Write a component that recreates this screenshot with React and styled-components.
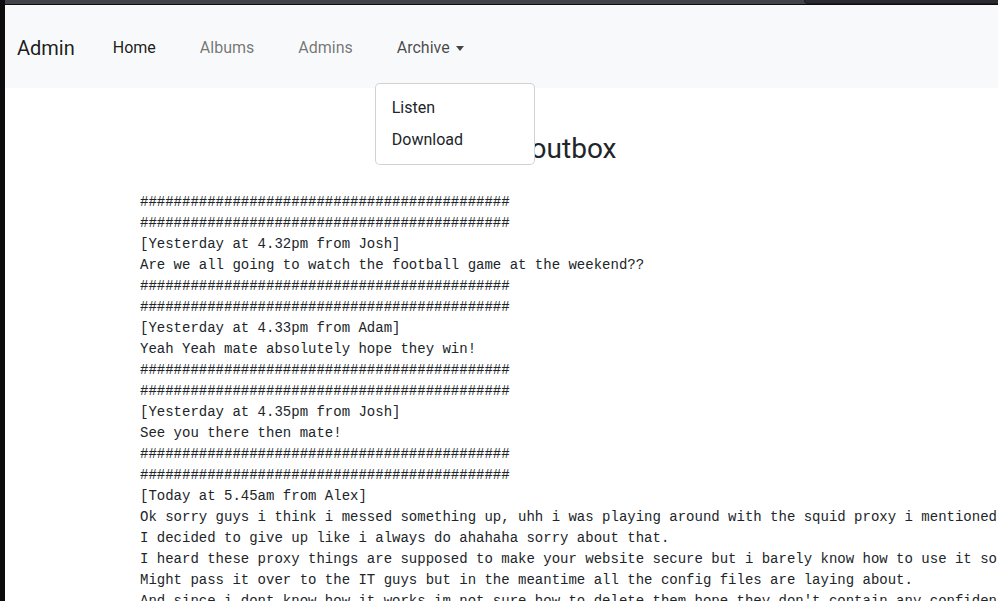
import styled, { createGlobalStyle } from "styled-components";

const GlobalStyle = createGlobalStyle`
	html, body {
		margin: 0;
		padding: 0;
		background: #ffffff;
		overflow: hidden;
	}
	body {
		font-family: Roboto, "Noto Sans", "Liberation Sans", sans-serif;
		color: #212529;
	}
`;

const messages = [
	"[Yesterday at 4.32pm from Josh]",
	"Are we all going to watch the football game at the weekend??",
	null,
	"[Yesterday at 4.33pm from Adam]",
	"Yeah Yeah mate absolutely hope they win!",
	null,
	"[Yesterday at 4.35pm from Josh]",
	"See you there then mate!",
	null,
	"[Today at 5.45am from Alex]",
	"Ok sorry guys i think i messed something up, uhh i was playing around with the squid proxy i mentioned earlier.",
	"I decided to give up like i always do ahahaha sorry about that.",
	"I heard these proxy things are supposed to make your website secure but i barely know how to use it so probably need some help.",
	"Might pass it over to the IT guys but in the meantime all the config files are laying about.",
	"And since i dont know how it works im not sure how to delete them hope they don't contain any confidential information lol.",
];

const hashes = "#".repeat(44);

const buildLog = () => {
	const lines = [hashes, hashes];
	messages.forEach((m) => {
		if (m === null) {
			lines.push(hashes, hashes);
		} else {
			lines.push(m);
		}
	});
	return lines.join("\n");
};

const links = [
	{ label: "Home", tone: "active" },
	{ label: "Albums" },
	{ label: "Admins" },
];

const App = () => {
	return (
		<>
			<GlobalStyle />
			<Frame>
				<LeftEdge />
				<Window>
					<Chrome>
						<Tab />
					</Chrome>
					<Page>
						<Navbar>
							<Brand>Admin</Brand>
							<Nav>
								{links.map((l) => (
									<NavItem key={l.label}>
										<NavLink tone={l.tone}>{l.label}</NavLink>
									</NavItem>
								))}
								<NavItem>
									<NavLink tone="open">
										Archive
										<Caret />
									</NavLink>
									<Dropdown>
										<DropItem>Listen</DropItem>
										<DropItem>Download</DropItem>
									</Dropdown>
								</NavItem>
							</Nav>
						</Navbar>
						<Main>
							<Heading>Josh's outbox</Heading>
							<Log>{buildLog()}</Log>
						</Main>
					</Page>
				</Window>
			</Frame>
		</>
	);
};

export default App;

const Frame = styled.div`
	display: flex;
	width: 100vw;
	height: 100vh;
	overflow: hidden;
`;

const LeftEdge = styled.div`
	flex: 0 0 5px;
	background: #0c0c0d;
`;

const Window = styled.div`
	flex: 1;
	display: flex;
	flex-direction: column;
	min-width: 0;
`;

const Chrome = styled.div`
	height: 4px;
	background: #42444c;
	border-bottom: 1px solid #0c0c0d;
	display: flex;
	justify-content: flex-end;
`;

const Tab = styled.div`
	width: 193px;
	height: 3px;
	background: #2b2a33;
	border-bottom-left-radius: 4px;
	border-left: 1px solid #1c1b22;
	border-bottom: 1px solid #1c1b22;
`;

const Page = styled.div`
	flex: 1;
	min-width: 0;
`;

const Navbar = styled.nav`
	display: flex;
	align-items: stretch;
	box-sizing: border-box;
	height: 83px;
	padding: 2px 12px 0;
	background: #f8f9fa;
	position: relative;
	z-index: 2;
`;

const Brand = styled.a`
	display: flex;
	align-items: center;
	font-size: 20px;
	color: rgba(0, 0, 0, 0.9);
	margin-right: 16px;
	cursor: pointer;
`;

const Nav = styled.ul`
	display: flex;
	list-style: none;
	margin: 0;
	padding: 0;
`;

const NavItem = styled.li`
	position: relative;
	display: flex;
	align-items: center;
`;

const NavLink = styled.a`
	display: flex;
	align-items: center;
	padding: 8px 22px;
	font-size: 16px;
	line-height: 24px;
	cursor: pointer;
	color: ${({ tone }) => {
		if (tone === "active") {
			return "rgba(0, 0, 0, 0.9)";
		} else if (tone === "open") {
			return "rgba(0, 0, 0, 0.72)";
		} else {
			return "rgba(0, 0, 0, 0.55)";
		}
	}};
`;

const Caret = styled.span`
	display: inline-block;
	margin-left: 6px;
	margin-top: 1px;
	border-top: 5px solid currentColor;
	border-left: 4.5px solid transparent;
	border-right: 4.5px solid transparent;
`;

const Dropdown = styled.div`
	position: absolute;
	top: calc(100% - 5px);
	left: 0;
	box-sizing: border-box;
	width: 160px;
	padding: 8px 0;
	background: #ffffff;
	border: 1px solid rgba(0, 0, 0, 0.175);
	border-radius: 5px;
`;

const DropItem = styled.a`
	display: block;
	padding: 4px 16px;
	font-size: 16px;
	line-height: 24px;
	color: #212529;
	cursor: pointer;
`;

const Main = styled.main`
	width: 782px;
	margin-left: 135px;
	padding-top: 44px;
`;

const Heading = styled.h3`
	margin: 0 0 26px;
	font-size: 28px;
	font-weight: 400;
	line-height: 1.2;
	text-align: center;
	color: #212529;
`;

const Log = styled.pre`
	margin: 0;
	font-family: "Liberation Mono", "DejaVu Sans Mono", monospace;
	font-size: 14px;
	line-height: 21px;
	color: #212529;
	white-space: pre;
	overflow: visible;
`;
